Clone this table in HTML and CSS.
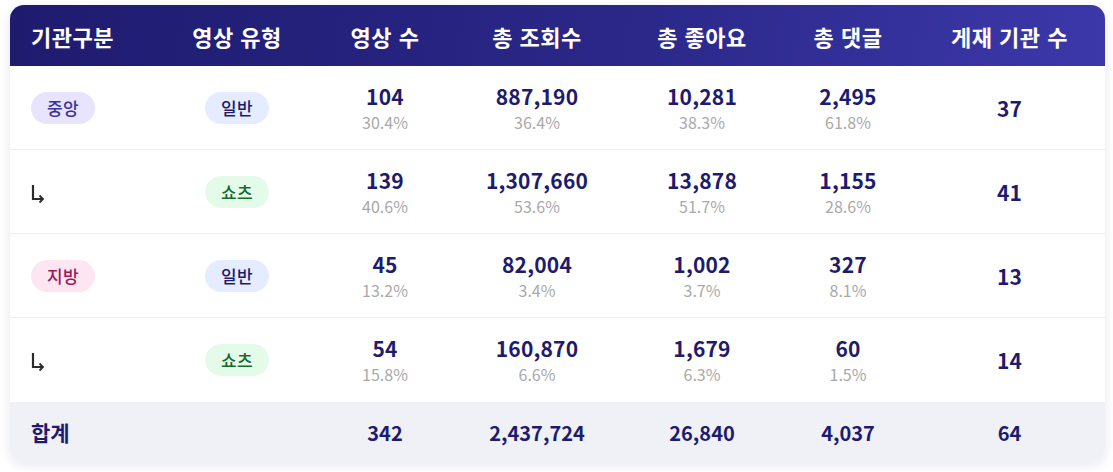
FILE: index.html
```html
<!DOCTYPE html>
<html lang="ko">
<head>
<meta charset="utf-8">
<link rel="stylesheet" href="styles.css">
</head>
<body>
<div class="card">
  <div class="row head">
    <div class="cell first">기관구분</div>
    <div class="cell">영상 유형</div>
    <div class="cell">영상 수</div>
    <div class="cell">총 조회수</div>
    <div class="cell">총 좋아요</div>
    <div class="cell">총 댓글</div>
    <div class="cell">게재 기관 수</div>
  </div>
  <div class="row body">
    <div class="cell first"><span class="badge central">중앙</span></div>
    <div class="cell"><span class="badge normal">일반</span></div>
    <div class="cell"><span class="num">104</span><span class="pct">30.4%</span></div>
    <div class="cell"><span class="num">887,190</span><span class="pct">36.4%</span></div>
    <div class="cell"><span class="num">10,281</span><span class="pct">38.3%</span></div>
    <div class="cell"><span class="num">2,495</span><span class="pct">61.8%</span></div>
    <div class="cell"><span class="num">37</span></div>
  </div>
  <div class="row body">
    <div class="cell first"><svg class="sub" width="14" height="20" viewBox="0 0 14 20"><path d="M2 1 V15 H12" fill="none" stroke="#2b2b2b" stroke-width="2.2"/><path d="M8.5 11.5 L12 15 L8.5 18.5" fill="none" stroke="#2b2b2b" stroke-width="1.8"/></svg></div>
    <div class="cell"><span class="badge shorts">쇼츠</span></div>
    <div class="cell"><span class="num">139</span><span class="pct">40.6%</span></div>
    <div class="cell"><span class="num">1,307,660</span><span class="pct">53.6%</span></div>
    <div class="cell"><span class="num">13,878</span><span class="pct">51.7%</span></div>
    <div class="cell"><span class="num">1,155</span><span class="pct">28.6%</span></div>
    <div class="cell"><span class="num">41</span></div>
  </div>
  <div class="row body">
    <div class="cell first"><span class="badge local">지방</span></div>
    <div class="cell"><span class="badge normal">일반</span></div>
    <div class="cell"><span class="num">45</span><span class="pct">13.2%</span></div>
    <div class="cell"><span class="num">82,004</span><span class="pct">3.4%</span></div>
    <div class="cell"><span class="num">1,002</span><span class="pct">3.7%</span></div>
    <div class="cell"><span class="num">327</span><span class="pct">8.1%</span></div>
    <div class="cell"><span class="num">13</span></div>
  </div>
  <div class="row body">
    <div class="cell first"><svg class="sub" width="14" height="20" viewBox="0 0 14 20"><path d="M2 1 V15 H12" fill="none" stroke="#2b2b2b" stroke-width="2.2"/><path d="M8.5 11.5 L12 15 L8.5 18.5" fill="none" stroke="#2b2b2b" stroke-width="1.8"/></svg></div>
    <div class="cell"><span class="badge shorts">쇼츠</span></div>
    <div class="cell"><span class="num">54</span><span class="pct">15.8%</span></div>
    <div class="cell"><span class="num">160,870</span><span class="pct">6.6%</span></div>
    <div class="cell"><span class="num">1,679</span><span class="pct">6.3%</span></div>
    <div class="cell"><span class="num">60</span><span class="pct">1.5%</span></div>
    <div class="cell"><span class="num">14</span></div>
  </div>
  <div class="row foot">
    <div class="cell first total">합계</div>
    <div class="cell"></div>
    <div class="cell">342</div>
    <div class="cell">2,437,724</div>
    <div class="cell">26,840</div>
    <div class="cell">4,037</div>
    <div class="cell">64</div>
  </div>
</div>
</body>
</html>
```

FILE: styles.css
```css
* { box-sizing: border-box; }
html, body { margin: 0; padding: 0; background: #ffffff; }
body {
  padding: 5px 8px 9px 10px;
  font-family: "Noto Sans CJK KR", "Noto Sans", sans-serif;
}
.card {
  width: 1095px;
  border-radius: 14px;
  overflow: hidden;
  background: #ffffff;
  box-shadow: 0 3px 12px rgba(30, 27, 110, 0.10);
}
.row {
  display: grid;
  grid-template-columns: 154px 146px 150px 154px 176px 116px 199px;
  align-items: center;
}
.cell {
  display: flex;
  flex-direction: column;
  align-items: center;
  justify-content: center;
  text-align: center;
}
.cell.first {
  align-items: flex-start;
  padding-left: 21px;
}
.row > .cell:last-child { padding-left: 8px; }
.head {
  height: 61px;
  background: linear-gradient(100deg, #1e1b6f 0%, #2a2788 55%, #3d38aa 100%);
  color: #ffffff;
  font-size: 22px;
  letter-spacing: 0.5px;
  font-weight: 700;
}
.body {
  height: 84px;
  border-bottom: 1px solid #ececf3;
}
.body:nth-child(5) { border-bottom: none; }
.num {
  font-size: 21px;
  font-weight: 700;
  color: #1e1b6e;
  line-height: 26px;
  letter-spacing: 0.2px;
}
.pct {
  font-size: 16px;
  color: #a9a9a9;
  line-height: 22px;
  margin-top: 2px;
  font-weight: 400;
}
.badge {
  display: inline-block;
  height: 32px;
  line-height: 32px;
  padding: 0 16px;
  border-radius: 16px;
  font-size: 17px;
  font-weight: 500;
  letter-spacing: 0.3px;
}
.central { background: #e7e4fb; color: #3b30a3; }
.normal { background: #e6ecff; color: #1e1b6e; }
.shorts { background: #e5fbea; color: #17692c; }
.local { background: #fde6f1; color: #9c1a5b; }
.sub {
  display: block;
  margin-top: 4px;
}
.foot {
  height: 60px;
  background: #f0f1f7;
  color: #1e1b6e;
  font-size: 20px;
  font-weight: 700;
}
.foot .total { font-size: 21px; }
```
